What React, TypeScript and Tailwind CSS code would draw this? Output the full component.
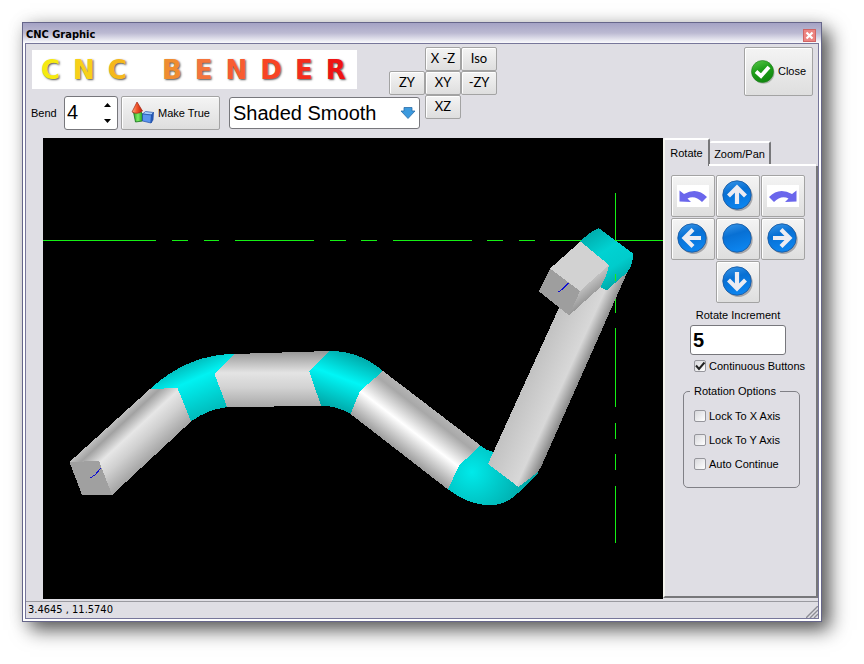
import { useState } from 'react'
import type { ReactNode } from 'react'
import clsx from 'clsx'

const logo = [
  { letter: 'C', color: 'text-[#f6ea10]' },
  { letter: 'N', color: 'text-[#f8d018]' },
  { letter: 'C', color: 'text-[#f5b81c]' },
  { letter: '', color: 'w-[9px]' },
  { letter: 'B', color: 'text-[#f08c30]' },
  { letter: 'E', color: 'text-[#f4743c]' },
  { letter: 'N', color: 'text-[#f85c30]' },
  { letter: 'D', color: 'text-[#f84424]' },
  { letter: 'E', color: 'text-[#f42c1c]' },
  { letter: 'R', color: 'text-[#ee1414]' },
]

const views = [
  { label: 'X -Z', cell: 'col-start-2 row-start-1' },
  { label: 'Iso', cell: 'col-start-3 row-start-1' },
  { label: 'ZY', cell: 'col-start-1 row-start-2' },
  { label: 'XY', cell: 'col-start-2 row-start-2' },
  { label: '-ZY', cell: 'col-start-3 row-start-2' },
  { label: 'XZ', cell: 'col-start-2 row-start-3' },
]

const shadeModes = ['Shaded Smooth', 'Shaded Flat', 'Wireframe']

type ButtonProps = {
  children: ReactNode
  className?: string
  label?: string
  onClick?: () => void
}

const Button = ({ children, className, label, onClick }: ButtonProps) => (
  <button
    type="button"
    aria-label={label}
    onClick={onClick}
    className={clsx(
      'flex items-center justify-center rounded-[2px] border border-[#a3a3a3] bg-linear-to-b from-[#f4f4f4] to-[#dedede] shadow-[inset_1px_1px_0_#ffffff] active:to-[#f4f4f4]',
      className,
    )}
  >
    {children}
  </button>
)

const ShapesIcon = () => (
  <svg width="24" height="24" viewBox="0 0 24 24" aria-hidden="true">
    <defs>
      <linearGradient id="shape-cone" x1="0" x2="1">
        <stop offset="0" stopColor="#ffb08a" />
        <stop offset="0.45" stopColor="#f4582c" />
        <stop offset="1" stopColor="#b81c08" />
      </linearGradient>
      <linearGradient id="shape-green" x1="0" x2="1">
        <stop offset="0" stopColor="#2fa82a" />
        <stop offset="0.5" stopColor="#7dee62" />
        <stop offset="1" stopColor="#1e9a20" />
      </linearGradient>
    </defs>
    <path d="M2.500 11 9 9.500l2.500 3.500v7l-7 1z" fill="url(#shape-green)" stroke="#127016" strokeWidth="0.8" />
    <path d="M6 1 11.500 10Q6.500 14 1 11z" fill="url(#shape-cone)" stroke="#a02412" strokeWidth="0.7" />
    <path d="m11.500 13 3-2.500 8 1-2 2.500z" fill="#a8d0ff" stroke="#1e4fa8" strokeWidth="0.7" />
    <path d="m11.500 13 9 1-.5 8-8.500-2z" fill="#5a94ee" stroke="#1e4fa8" strokeWidth="0.7" />
    <path d="m20.500 14 2-2.500-.5 7.500-2 3z" fill="#2458bc" stroke="#1e4fa8" strokeWidth="0.7" />
  </svg>
)

const CheckIcon = () => (
  <svg width="24" height="24" viewBox="0 0 24 24" aria-hidden="true">
    <defs>
      <linearGradient id="check-ball" x1="0" y1="0" x2="0.4" y2="1">
        <stop offset="0" stopColor="#5cc84c" />
        <stop offset="0.5" stopColor="#1fa01a" />
        <stop offset="1" stopColor="#128a10" />
      </linearGradient>
    </defs>
    <circle cx="12.500" cy="12.800" r="11" fill="#8a9a8a" opacity="0.6" />
    <circle cx="11.500" cy="11.500" r="11" fill="url(#check-ball)" stroke="#1c7c1a" strokeWidth="0.6" />
    <path d="m5 11.500 5 4.500 8-9" fill="none" stroke="#fff" strokeWidth="3.800" />
  </svg>
)

const ballArrows = {
  up: 'M15 24V8M6.500 16 15 7.500l8.500 8.500',
  down: 'M15 6v16M6.500 14l8.500 8.500 8.500-8.500',
  left: 'M24 15H8M16 6.500 7.500 15l8.500 8.500',
  right: 'M6 15h16M14 6.500l8.500 8.500-8.500 8.500',
  none: '',
}

const BallIcon = ({ arrow }: { arrow: keyof typeof ballArrows }) => (
  <svg width="32" height="32" viewBox="0 0 32 32" aria-hidden="true">
    <defs>
      <linearGradient id={`ball-${arrow}`} x1="0" y1="0" x2="0.3" y2="1">
        <stop offset="0" stopColor="#3a98ea" />
        <stop offset="0.45" stopColor="#0870d4" />
        <stop offset="1" stopColor="#0c84ee" />
      </linearGradient>
    </defs>
    <circle cx="16.500" cy="16.800" r="14.200" fill="#8c8c90" opacity="0.7" />
    <circle cx="15" cy="15" r="14.200" fill={`url(#ball-${arrow})`} stroke="#1c5ca4" strokeWidth="0.9" />
    <path d={ballArrows[arrow]} fill="none" stroke="#ececf2" strokeWidth="4.200" />
  </svg>
)

const TurnIcon = ({ flip }: { flip?: boolean }) => (
  <svg
    width="32"
    height="22"
    viewBox="0 0 32 22"
    aria-hidden="true"
    className={clsx('bg-white', flip && '-scale-x-100')}
  >
    <path d="M2.500 5.500v11l11.500.5-3.500-3.500Q18 10 25 17l5-5Q20 1.500 7 9z" fill="#6a66ec" />
  </svg>
)

const TubeView = () => (
  <svg
    viewBox="43 138 620 461"
    className="block h-full w-full"
    shapeRendering="crispEdges"
    role="img"
    aria-label="Bent tube"
  >
    <defs>
      <linearGradient id="leg-1" gradientUnits="userSpaceOnUse" x1="110" y1="425" x2="145" y2="463">
        <stop offset="0" stopColor="#c0c0c0" />
        <stop offset="0.14" stopColor="#a2a2a2" />
        <stop offset="0.4" stopColor="#e6e6e6" />
        <stop offset="0.65" stopColor="#d0d0d0" />
        <stop offset="1" stopColor="#a6a6a6" />
      </linearGradient>
      <linearGradient id="leg-2" gradientUnits="userSpaceOnUse" x1="0" y1="352" x2="0" y2="407">
        <stop offset="0" stopColor="#989898" />
        <stop offset="0.38" stopColor="#e4e4e4" />
        <stop offset="0.65" stopColor="#d2d2d2" />
        <stop offset="1" stopColor="#a8a8a8" />
      </linearGradient>
      <linearGradient id="leg-3" gradientUnits="userSpaceOnUse" x1="383" y1="371" x2="350" y2="414">
        <stop offset="0" stopColor="#b4b4b4" />
        <stop offset="0.15" stopColor="#a8a8a8" />
        <stop offset="0.55" stopColor="#ffffff" />
        <stop offset="1" stopColor="#9c9c9c" />
      </linearGradient>
      <linearGradient id="leg-4" gradientUnits="userSpaceOnUse" x1="488" y1="464" x2="533" y2="484.500">
        <stop offset="0" stopColor="#c2c2c2" />
        <stop offset="0.7" stopColor="#d8d8d8" />
        <stop offset="1" stopColor="#858585" />
      </linearGradient>
      <linearGradient id="leg-5" gradientUnits="userSpaceOnUse" x1="580" y1="285" x2="592" y2="300">
        <stop offset="0" stopColor="#cccccc" />
        <stop offset="1" stopColor="#8e8e8e" />
      </linearGradient>
      <linearGradient id="bend-1" gradientUnits="userSpaceOnUse" x1="183" y1="358" x2="208" y2="416">
        <stop offset="0" stopColor="#00a8a8" />
        <stop offset="0.38" stopColor="#00f2f2" />
        <stop offset="1" stopColor="#00b8b8" />
      </linearGradient>
      <linearGradient id="bend-2" gradientUnits="userSpaceOnUse" x1="356" y1="353" x2="334" y2="412">
        <stop offset="0" stopColor="#00a4a4" />
        <stop offset="0.45" stopColor="#00f6f6" />
        <stop offset="1" stopColor="#00a0a0" />
      </linearGradient>
      <radialGradient id="bend-3" gradientUnits="userSpaceOnUse" cx="472" cy="472" r="60">
        <stop offset="0" stopColor="#00eaea" />
        <stop offset="1" stopColor="#00a4a4" />
      </radialGradient>
      <linearGradient id="bend-4" gradientUnits="userSpaceOnUse" x1="590" y1="232" x2="622" y2="282">
        <stop offset="0" stopColor="#00acac" />
        <stop offset="0.4" stopColor="#00d2d2" />
        <stop offset="0.7" stopColor="#00cccc" />
        <stop offset="1" stopColor="#00a8a8" />
      </linearGradient>
    </defs>

    <path
      d="M43 240.500H156M172 240.500h16M204 240.500h15M235 240.500h79M330 240.500h16M361 240.500h16M393 240.500h79M487 240.500h16M519 240.500h16M550 240.500h113M615.500 193v56M615.500 297v16M615.500 328v79M615.500 423v16M615.500 454v16M615.500 486v57"
      stroke="#14f014"
      fill="none"
    />

    <path d="M150 389 177.500 388 191 421.500 112 495 99 461 69.500 462z" fill="url(#leg-1)" />
    <path d="M69.500 462 99 461 112 495H82z" fill="#a0a0a0" />
    <path d="M234.500 354 330 351 309 371 321 405.500 227 407.500 214.500 374z" fill="url(#leg-2)" />
    <path d="M150 389Q188 354 234.500 354L214.500 374 227 407Q206 410 191 421.500L177.500 388z" fill="url(#bend-1)" />
    <path d="M383 371 480.500 445.500 459 465.500 448 489.500 350.500 414 360 391z" fill="url(#leg-3)" />
    <path d="M330 351Q360 351 383 371L360 391 350.500 414Q337 406 321 405.500L309 371z" fill="url(#bend-2)" />
    <path
      d="M480.500 445.500Q487 451 494 452L540 466 538 473 527 485 518 493Q506 505.500 488 505.500 468 504 448 489.500L459 465.500z"
      fill="url(#bend-3)"
    />
    <path d="M488 464 518.500 487 538 472 541 467 631 264 600 235 558 310z" fill="url(#leg-4)" />
    <path
      d="M580.500 241.500Q589 232 598.500 228L632.500 253Q634 265 626.500 273L606.500 290.500 600.500 287 609 265z"
      fill="url(#bend-4)"
    />
    <path d="M615.500 274v7" stroke="#14f014" />
    <path d="M550 268.500 580.500 241.500 609 265 580 291z" fill="#d2d2d2" />
    <path d="M580 291 609 265Q606 278 600.500 287L569 315.500z" fill="url(#leg-5)" />
    <path d="M550 268.500 580 291 569 315.500 539 291.500z" fill="#9e9e9e" />
    <path d="m558.500 292 4-3 6-6M90 478l5-3 6-7" stroke="#1010d0" fill="none" />
  </svg>
)

type CheckProps = {
  label: string
  defaultChecked?: boolean
}

const Check = ({ label, defaultChecked }: CheckProps) => (
  <label className="flex h-6 items-center gap-[3px] whitespace-nowrap">
    <span className="grid size-3 shrink-0">
      <input
        type="checkbox"
        defaultChecked={defaultChecked}
        className="peer col-start-1 row-start-1 size-3 appearance-none rounded-[2px] border border-[#96969c] bg-linear-to-br from-[#d8d8dc] to-white"
      />
      <svg
        viewBox="0 0 12 12"
        aria-hidden="true"
        className="pointer-events-none invisible col-start-1 row-start-1 size-3 peer-checked:visible"
      >
        <path d="m2 5.500 3 3.500 5.500-6.500" fill="none" stroke="#222" strokeWidth="2" />
      </svg>
    </span>
    {label}
  </label>
)

const Toolbar = () => {
  const [bend, setBend] = useState(4)

  return (
    <header className="flex items-start px-[5px] pt-[3px] pb-2">
      <div className="flex flex-col gap-[7px] pt-[3px]">
        <h1 className="ml-px flex h-[39px] w-[325px] items-center gap-[13px] bg-white pl-[9px] font-['DejaVu_Sans',sans-serif] text-[26px] leading-none font-bold">
          {logo.map((item, i) => (
            <span key={i} className={clsx('[text-shadow:1px_1px_2px_#555555]', item.color)}>
              {item.letter}
            </span>
          ))}
        </h1>

        <div className="flex items-center">
          <label htmlFor="bend" className="w-[33px]">
            Bend
          </label>
          <div className="flex h-[34px] w-[54px] rounded-[3px] border border-[#77777c] bg-white">
            <input
              id="bend"
              value={bend}
              onChange={(e) => setBend(Number(e.target.value) || 0)}
              className="w-8 min-w-0 pb-[2px] pl-[2px] text-[20px] outline-none"
            />
            <div className="flex w-5 flex-col">
              <button
                type="button"
                aria-label="Next bend"
                onClick={() => setBend(bend + 1)}
                className="flex flex-1 items-center justify-center"
              >
                <svg width="7" height="4" viewBox="0 0 7 4" aria-hidden="true">
                  <path d="M0 4 3.500 0 7 4z" />
                </svg>
              </button>
              <button
                type="button"
                aria-label="Previous bend"
                onClick={() => setBend(bend - 1)}
                className="flex flex-1 items-center justify-center"
              >
                <svg width="7" height="4" viewBox="0 0 7 4" aria-hidden="true">
                  <path d="M0 0 3.500 4 7 0z" />
                </svg>
              </button>
            </div>
          </div>
          <Button className="ml-[3px] h-[34px] w-[99px] gap-[3px]">
            <ShapesIcon />
            Make True
          </Button>
          <div className="ml-[9px] grid h-8 w-[191px] items-center">
            <select
              aria-label="Shading"
              className="col-start-1 row-start-1 h-8 w-full appearance-none rounded-[3px] border border-[#77777c] bg-white pr-6 pb-[2px] pl-[3px] text-[20px]"
            >
              {shadeModes.map((mode) => (
                <option key={mode}>{mode}</option>
              ))}
            </select>
            <svg
              width="16"
              height="14"
              viewBox="0 0 16 14"
              aria-hidden="true"
              className="pointer-events-none col-start-1 row-start-1 mr-1 justify-self-end"
            >
              <path d="M4 1.500h8V5h3L8 12.500 1 5h3z" fill="#3c9ade" stroke="#2a6ca8" strokeWidth="0.8" />
            </svg>
          </div>
        </div>
      </div>

      {/* the left column of the view pad hangs over the end of the shading list */}
      <div className="pointer-events-none -ml-[31px] grid shrink-0 grid-cols-[repeat(3,36px)] grid-rows-[repeat(3,24px)]">
        {views.map((view) => (
          <Button
            key={view.label}
            className={clsx('pointer-events-auto font-[Lato,sans-serif] text-[13px]', view.cell)}
          >
            {view.label}
          </Button>
        ))}
      </div>

      <Button className="ml-auto h-[49px] w-[69px] shrink-0 gap-[3px]">
        <CheckIcon />
        Close
      </Button>
    </header>
  )
}

const RotatePane = () => (
  <div className="pt-[9px] pl-[6px]">
    <div className="grid w-[134px] grid-cols-[repeat(3,44px)] grid-rows-[repeat(3,42px)] gap-px">
      <Button label="Roll left">
        <TurnIcon />
      </Button>
      <Button label="Rotate up">
        <BallIcon arrow="up" />
      </Button>
      <Button label="Roll right">
        <TurnIcon flip />
      </Button>
      <Button label="Rotate left">
        <BallIcon arrow="left" />
      </Button>
      <Button label="Reset view">
        <BallIcon arrow="none" />
      </Button>
      <Button label="Rotate right">
        <BallIcon arrow="right" />
      </Button>
      <Button label="Rotate down" className="col-start-2">
        <BallIcon arrow="down" />
      </Button>
    </div>

    <div className="flex w-[134px] flex-col items-center pt-1">
      <label htmlFor="increment" className="leading-4">
        Rotate Increment
      </label>
      <input
        id="increment"
        defaultValue="5"
        className="mt-[2px] h-[30px] w-24 rounded-[3px] border border-[#77777c] bg-white pl-[2px] text-[20px] font-bold"
      />
    </div>

    <div className="-mt-px pl-[23px]">
      <Check label="Continuous Buttons" defaultChecked />
    </div>

    <fieldset className="mt-[5px] ml-3 h-[105px] w-[117px] rounded-[5px] border border-[#808086] px-[10px]">
      <legend className="-ml-1 px-1 leading-4">Rotation Options</legend>
      <div className="pt-[5px]">
        <Check label="Lock To X Axis" />
        <Check label="Lock To Y Axis" />
        <Check label="Auto Continue" />
      </div>
    </fieldset>
  </div>
)

const SidePanel = () => {
  const [tab, setTab] = useState('rotate')

  return (
    <aside className="flex w-[155px] shrink-0 flex-col pb-px">
      <div role="tablist" className="flex items-end">
        <button
          type="button"
          role="tab"
          aria-selected={tab === 'rotate'}
          onClick={() => setTab('rotate')}
          className="h-7 w-[47px] rounded-t-[2px] border-t-2 border-r-2 border-l-2 border-t-white border-r-[#77777a] border-l-[#f4f4ee]"
        >
          Rotate
        </button>
        <button
          type="button"
          role="tab"
          aria-selected={tab === 'zoom'}
          onClick={() => setTab('zoom')}
          className="h-[25px] w-[61px] rounded-t-[2px] border-t-2 border-r-2 border-t-white border-r-[#77777a]"
        >
          Zoom/Pan
        </button>
      </div>
      <div className="flex flex-1 flex-col border-r-2 border-b-2 border-l-2 border-r-[#77777a] border-b-[#77777a] border-l-[#f4f4ee]">
        <div className="-mt-[2px] ml-11 h-[2px] shrink-0 bg-white" />
        {tab === 'rotate' && <RotatePane />}
      </div>
    </aside>
  )
}

export default function App() {
  return (
    <div className="flex min-h-screen bg-white pt-[22px] pr-[42px] pb-[42px] pl-[22px] font-['Liberation_Sans',Arial,sans-serif] text-[11px] text-black">
      <div className="flex min-w-0 flex-1 flex-col border border-[#66668a] bg-white shadow-[8px_8px_18px_rgba(0,0,0,0.65),0_0_16px_rgba(0,0,0,0.08)]">
        <div className="flex h-5 items-center justify-between bg-linear-to-b from-[#a4a2c4] via-[#bcbad2] to-[#fbfbfd] pr-[5px] pl-[3px] font-['DejaVu_Sans_Condensed','DejaVu_Sans',sans-serif] font-bold">
          <span className="pt-1">CNC Graphic</span>
          <button
            type="button"
            aria-label="Close window"
            className="mt-1 flex size-[13px] items-center justify-center border border-[#d06464] bg-[#ec8480]"
          >
            <svg width="9" height="9" viewBox="0 0 9 9" aria-hidden="true">
              <path d="m1.500 1.500 6 6m0-6-6 6" stroke="#fff" strokeWidth="2.200" />
            </svg>
          </button>
        </div>

        <div className="mx-[2px] mb-[2px] flex flex-1 flex-col border border-[#77769a] bg-[#dfdee4]">
          <Toolbar />
          <main className="flex flex-1">
            <div className="ml-[17px] min-w-0 flex-1 bg-black">
              <TubeView />
            </div>
            <SidePanel />
          </main>
          <footer className="mt-[2px] flex h-[17px] items-center justify-between border-t border-[#9a9aa0] pl-[2px] font-['DejaVu_Sans_Condensed','DejaVu_Sans',sans-serif] leading-4">
            <span>3.4645 , 11.5740</span>
            <svg width="12" height="12" viewBox="0 0 12 12" aria-hidden="true" className="self-end">
              <path d="M0 12 12 0M4 12l8-8M8 12l4-4" stroke="#8c8c94" strokeWidth="1.400" />
            </svg>
          </footer>
        </div>
      </div>
    </div>
  )
}
